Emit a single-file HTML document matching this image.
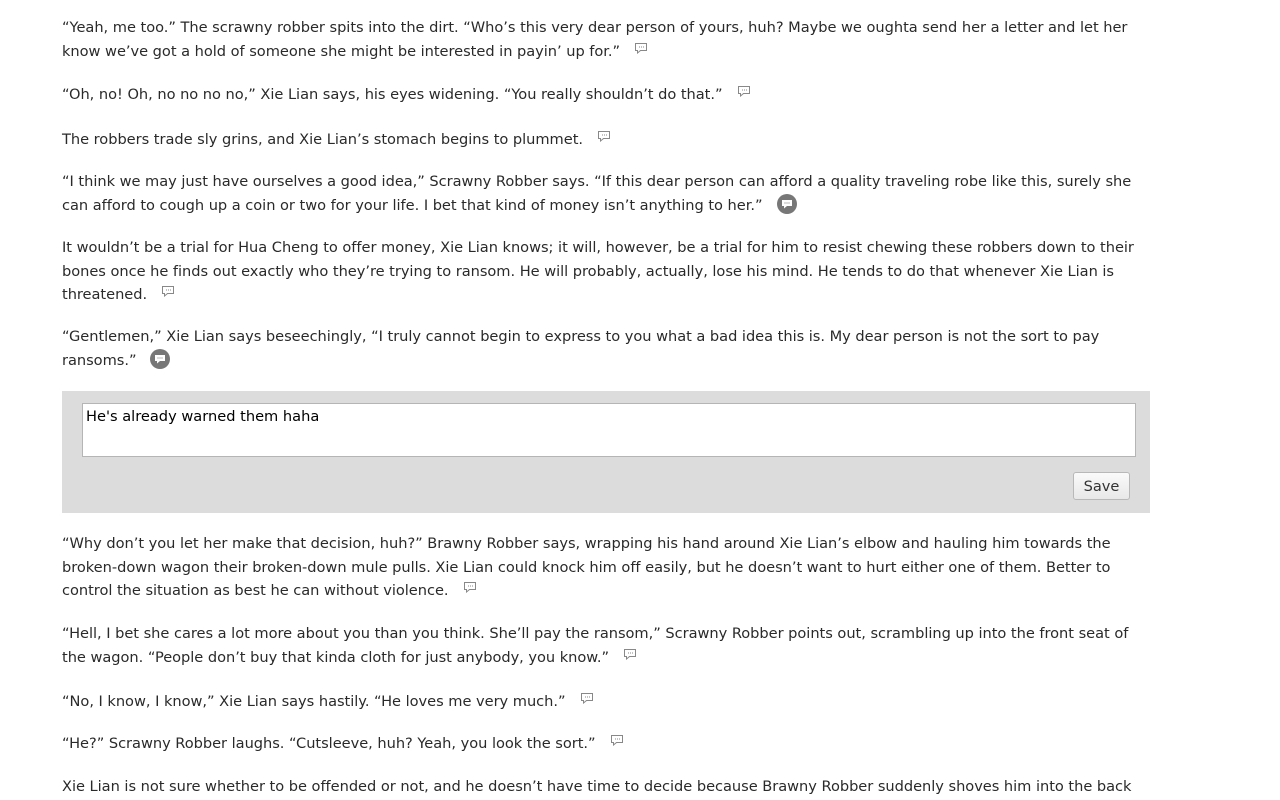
<!DOCTYPE html>
<html><head><meta charset="utf-8"><style>
body{margin:0;background:#fff;font-family:"DejaVu Sans","Liberation Sans",sans-serif;color:#2a2a2a;}
p{position:absolute;left:62px;margin:0;font-size:14.6px;line-height:23.5px;white-space:nowrap;letter-spacing:-0.03px}
.i{display:inline-block;width:14px;height:12px;margin-left:14px;vertical-align:2px;position:relative}
.i svg{position:absolute;left:0;top:0}
.b{display:inline-block;width:20px;height:20px;border-radius:50%;background:#777;margin-left:14px;vertical-align:-4px;position:relative}
.box{position:absolute;left:62px;top:391px;width:1088px;height:122px;background:#dcdcdc}
.ta{position:absolute;left:20px;top:12px;width:1054px;height:54px;background:#fff;border:1px solid #b5b5b5;font-size:14.6px;padding:4px 3px;box-sizing:border-box;color:#000}
.btn{position:absolute;left:1011px;top:81px;width:57px;height:28px;border:1px solid #b8b8b8;border-radius:3px;background:linear-gradient(#fafafa,#e8e8e8);font-size:14.6px;text-align:center;line-height:27px;color:#333;box-sizing:border-box}
</style></head><body>
<p style="top:16px">“Yeah, me too.” The scrawny robber spits into the dirt. “Who’s this very dear person of yours, huh? Maybe we oughta send her a letter and let her<br>know we’ve got a hold of someone she might be interested in payin’ up for.”<span class="i"><svg width="14" height="12"><path d="M1.5 1.5h11v7h-6l-3 2.5v-2.5h-2z" fill="none" stroke="#888"/><path d="M5 5h1M7 5h1M9 5h1" stroke="#888"/></svg></span></p>
<p style="top:83px">“Oh, no! Oh, no no no no,” Xie Lian says, his eyes widening. “You really shouldn’t do that.”<span class="i"><svg width="14" height="12"><path d="M1.5 1.5h11v7h-6l-3 2.5v-2.5h-2z" fill="none" stroke="#888"/><path d="M5 5h1M7 5h1M9 5h1" stroke="#888"/></svg></span></p>
<p style="top:128px">The robbers trade sly grins, and Xie Lian’s stomach begins to plummet.<span class="i"><svg width="14" height="12"><path d="M1.5 1.5h11v7h-6l-3 2.5v-2.5h-2z" fill="none" stroke="#888"/><path d="M5 5h1M7 5h1M9 5h1" stroke="#888"/></svg></span></p>
<p style="top:170px">“I think we may just have ourselves a good idea,” Scrawny Robber says. “If this dear person can afford a quality traveling robe like this, surely she<br>can afford to cough up a coin or two for your life. I bet that kind of money isn’t anything to her.”<span class="b"><svg width="20" height="20"><path d="M5 6h10v6h-5l-3 2.5v-2.5h-2z" fill="#fff"/><path d="M7.5 9h1M9.5 9h1M11.5 9h1" stroke="#777"/></svg></span></p>
<p style="top:236px">It wouldn’t be a trial for Hua Cheng to offer money, Xie Lian knows; it will, however, be a trial for him to resist chewing these robbers down to their<br>bones once he finds out exactly who they’re trying to ransom. He will probably, actually, lose his mind. He tends to do that whenever Xie Lian is<br>threatened.<span class="i"><svg width="14" height="12"><path d="M1.5 1.5h11v7h-6l-3 2.5v-2.5h-2z" fill="none" stroke="#888"/><path d="M5 5h1M7 5h1M9 5h1" stroke="#888"/></svg></span></p>
<p style="top:325px">“Gentlemen,” Xie Lian says beseechingly, “I truly cannot begin to express to you what a bad idea this is. My dear person is not the sort to pay<br>ransoms.”<span class="b"><svg width="20" height="20"><path d="M5 6h10v6h-5l-3 2.5v-2.5h-2z" fill="#fff"/><path d="M7.5 9h1M9.5 9h1M11.5 9h1" stroke="#777"/></svg></span></p>
<div class="box"><div class="ta">He's already warned them haha</div><div class="btn">Save</div></div>
<p style="top:532px">“Why don’t you let her make that decision, huh?” Brawny Robber says, wrapping his hand around Xie Lian’s elbow and hauling him towards the<br>broken-down wagon their broken-down mule pulls. Xie Lian could knock him off easily, but he doesn’t want to hurt either one of them. Better to<br>control the situation as best he can without violence.<span class="i"><svg width="14" height="12"><path d="M1.5 1.5h11v7h-6l-3 2.5v-2.5h-2z" fill="none" stroke="#888"/><path d="M5 5h1M7 5h1M9 5h1" stroke="#888"/></svg></span></p>
<p style="top:622px">“Hell, I bet she cares a lot more about you than you think. She’ll pay the ransom,” Scrawny Robber points out, scrambling up into the front seat of<br>the wagon. “People don’t buy that kinda cloth for just anybody, you know.”<span class="i"><svg width="14" height="12"><path d="M1.5 1.5h11v7h-6l-3 2.5v-2.5h-2z" fill="none" stroke="#888"/><path d="M5 5h1M7 5h1M9 5h1" stroke="#888"/></svg></span></p>
<p style="top:690px">“No, I know, I know,” Xie Lian says hastily. “He loves me very much.”<span class="i"><svg width="14" height="12"><path d="M1.5 1.5h11v7h-6l-3 2.5v-2.5h-2z" fill="none" stroke="#888"/><path d="M5 5h1M7 5h1M9 5h1" stroke="#888"/></svg></span></p>
<p style="top:732px">“He?” Scrawny Robber laughs. “Cutsleeve, huh? Yeah, you look the sort.”<span class="i"><svg width="14" height="12"><path d="M1.5 1.5h11v7h-6l-3 2.5v-2.5h-2z" fill="none" stroke="#888"/><path d="M5 5h1M7 5h1M9 5h1" stroke="#888"/></svg></span></p>
<p style="top:775px">Xie Lian is not sure whether to be offended or not, and he doesn’t have time to decide because Brawny Robber suddenly shoves him into the back</p>
</body></html>
